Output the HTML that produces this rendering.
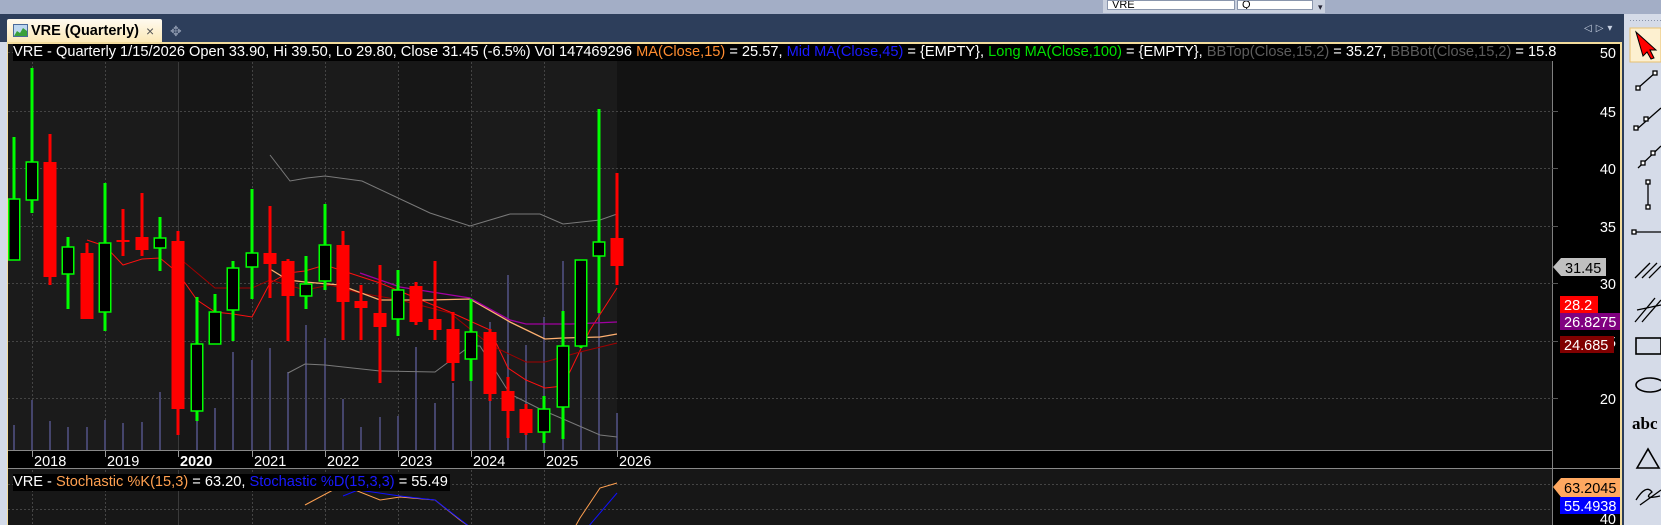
<!DOCTYPE html>
<html><head><meta charset="utf-8"><style>
*{margin:0;padding:0;box-sizing:border-box}
body{width:1661px;height:525px;overflow:hidden;background:#2c3d5a;font-family:"Liberation Sans",Arial,sans-serif;position:relative}
.abs{position:absolute}
.hdr{position:absolute;left:13px;top:44px;height:17px;background:#000;color:#fff;font-size:14.6px;line-height:17px;white-space:nowrap;padding-right:2px}
</style></head><body>
<div class="abs" style="left:0;top:0;width:1661px;height:14px;background:#a3aec6"></div>
<div class="abs" style="left:1103px;top:0;width:222px;height:13px;background:#c9d0de"></div>
<div class="abs" style="left:1107px;top:0;width:128px;height:10px;background:#fff;border:1px solid #8a96ad;font-size:11px;line-height:8px;padding-left:4px;color:#000;overflow:hidden">VRE</div>
<div class="abs" style="left:1237px;top:0;width:76px;height:10px;background:#fff;border:1px solid #8a96ad;font-size:11px;line-height:8px;padding-left:4px;color:#000;overflow:hidden">Q</div>
<div class="abs" style="left:1318px;top:2px;font-size:9px;color:#223">▾</div>
<div class="abs" style="left:0;top:14px;width:1661px;height:28px;background:#2d3e5b"></div>
<div class="abs" style="left:7px;top:19px;width:155px;height:24px;background:linear-gradient(#fffaf0,#fbe8b4);border-radius:2px 2px 0 0"></div>
<svg class="abs" style="left:13px;top:24px" width="15" height="13"><rect x="0.5" y="0.5" width="14" height="12" fill="#bcd6f0" stroke="#4a6a9a"/><path d="M1 12 L4 7 L7 9 L10 4 L14 7 L14 12Z" fill="#3aa03a"/></svg>
<div class="abs" style="left:31px;top:21px;font-size:14.5px;font-weight:bold;color:#000;line-height:20px">VRE (Quarterly)</div>
<div class="abs" style="left:146px;top:21px;font-size:14px;color:#555;line-height:20px">×</div>
<div class="abs" style="left:170px;top:21px;font-size:14px;color:#8894aa;line-height:20px">✥</div>
<div class="abs" style="left:1584px;top:23px;font-size:10px;color:#c9d2e2;letter-spacing:4px">◁▷▾</div>
<div class="abs" style="left:0;top:42px;width:7px;height:483px;background:#d3dae8"></div>
<div class="abs" style="left:7px;top:42px;width:1615px;height:483px;background:#f3dc9c"></div>
<svg class="abs" style="left:0;top:0" width="1661" height="525">
<rect x="8" y="44" width="1612" height="481" fill="#000"/>
<rect x="8" y="44" width="1544" height="406" fill="#171717"/>
<rect x="8" y="44" width="170" height="406" fill="#1b1b1b"/>
<rect x="252" y="44" width="146" height="406" fill="#1b1b1b"/>
<rect x="471" y="44" width="146" height="406" fill="#1b1b1b"/>
<rect x="617" y="44" width="935" height="406" fill="#131313"/>
<g stroke="#444" stroke-dasharray="2,2" stroke-width="1">
<line x1="8" y1="52.5" x2="1552" y2="52.5"/><line x1="8" y1="111.5" x2="1552" y2="111.5"/><line x1="8" y1="168.5" x2="1552" y2="168.5"/><line x1="8" y1="226.5" x2="1552" y2="226.5"/><line x1="8" y1="283.5" x2="1552" y2="283.5"/><line x1="8" y1="341.5" x2="1552" y2="341.5"/><line x1="8" y1="398.5" x2="1552" y2="398.5"/>
<line x1="32.5" y1="62" x2="32.5" y2="450"/><line x1="105.5" y1="62" x2="105.5" y2="450"/><line x1="252.5" y1="62" x2="252.5" y2="450"/><line x1="325.5" y1="62" x2="325.5" y2="450"/><line x1="398.5" y1="62" x2="398.5" y2="450"/><line x1="471.5" y1="62" x2="471.5" y2="450"/><line x1="544.5" y1="62" x2="544.5" y2="450"/>
</g>
<line x1="178.5" y1="62" x2="178.5" y2="450" stroke="#3a3a3a"/>
<line x1="1552.5" y1="44" x2="1552.5" y2="525" stroke="#808080"/>
<g stroke="#555" stroke-width="1"><line x1="1552" y1="52.5" x2="1558" y2="52.5"/><line x1="1552" y1="111.5" x2="1558" y2="111.5"/><line x1="1552" y1="168.5" x2="1558" y2="168.5"/><line x1="1552" y1="226.5" x2="1558" y2="226.5"/><line x1="1552" y1="283.5" x2="1558" y2="283.5"/><line x1="1552" y1="341.5" x2="1558" y2="341.5"/><line x1="1552" y1="398.5" x2="1558" y2="398.5"/></g>
<g stroke="#45456c" stroke-width="2">
<line x1="14" y1="425" x2="14" y2="450"/><line x1="32" y1="400" x2="32" y2="450"/><line x1="50" y1="421" x2="50" y2="450"/><line x1="68" y1="427" x2="68" y2="450"/><line x1="87" y1="427" x2="87" y2="450"/><line x1="105" y1="420" x2="105" y2="450"/><line x1="123" y1="423" x2="123" y2="450"/><line x1="142" y1="422" x2="142" y2="450"/><line x1="160" y1="392" x2="160" y2="450"/><line x1="197" y1="420" x2="197" y2="450"/><line x1="215" y1="408" x2="215" y2="450"/><line x1="233" y1="352" x2="233" y2="450"/><line x1="252" y1="360" x2="252" y2="450"/><line x1="270" y1="348" x2="270" y2="450"/><line x1="288" y1="372" x2="288" y2="450"/><line x1="306" y1="325" x2="306" y2="450"/><line x1="325" y1="338" x2="325" y2="450"/><line x1="343" y1="399" x2="343" y2="450"/><line x1="361" y1="427" x2="361" y2="450"/><line x1="380" y1="417" x2="380" y2="450"/><line x1="398" y1="416" x2="398" y2="450"/><line x1="416" y1="347" x2="416" y2="450"/><line x1="435" y1="403" x2="435" y2="450"/><line x1="453" y1="383" x2="453" y2="450"/><line x1="471" y1="322" x2="471" y2="450"/><line x1="490" y1="322" x2="490" y2="450"/><line x1="508" y1="275" x2="508" y2="450"/><line x1="526" y1="345" x2="526" y2="450"/><line x1="544" y1="317" x2="544" y2="450"/><line x1="563" y1="261" x2="563" y2="450"/><line x1="581" y1="352" x2="581" y2="450"/><line x1="599" y1="313" x2="599" y2="450"/><line x1="617" y1="413" x2="617" y2="450"/>
</g>
<g fill="none" stroke="#7a7a7a" stroke-width="1">
<polyline points="270,155 290,181 307,178 325,176 362,181 430,213 470,226 510,214 540,214 563,224 600,220 617,214"/>
<polyline points="288,373 305,364 325,365 380,371 435,372 470,346 480,346 510,394 540,409 600,435 617,437"/>
</g>
<polyline fill="none" stroke="#ff1010" stroke-width="1" points="87,240 105,246 123,265 142,259 160,258 178,273 197,300 215,312 233,314 252,317 270,283 288,273 305,271 325,265 380,283 450,312 490,330 508,368 526,380 545,388 563,386 590,330 617,288"/>
<polyline fill="none" stroke="#a00000" stroke-width="1" points="178,257 215,288 252,288 270,280 305,290 330,285 360,293 400,300 450,313 490,345 526,362 545,362 580,352 617,343"/>
<polyline fill="none" stroke="#ffb070" stroke-width="1.3" points="270,269 288,280 305,282 340,285 380,300 430,300 470,299 510,322 545,339 563,338 600,337 617,334"/>
<polyline fill="none" stroke="#a000a0" stroke-width="1.3" points="360,273 400,287 470,298 510,320 526,324 571,324 617,322"/>
<g id="c"></g>
<rect x="8" y="450" width="1544" height="18" fill="#000"/>
<line x1="8" y1="450.5" x2="1552" y2="450.5" stroke="#888"/>
<line x1="8" y1="468.5" x2="1620" y2="468.5" stroke="#888"/>
<g stroke="#999"><line x1="32.5" y1="451" x2="32.5" y2="457"/><line x1="105.5" y1="451" x2="105.5" y2="457"/><line x1="178.5" y1="451" x2="178.5" y2="457"/><line x1="252.5" y1="451" x2="252.5" y2="457"/><line x1="325.5" y1="451" x2="325.5" y2="457"/><line x1="398.5" y1="451" x2="398.5" y2="457"/><line x1="471.5" y1="451" x2="471.5" y2="457"/><line x1="544.5" y1="451" x2="544.5" y2="457"/><line x1="617.5" y1="451" x2="617.5" y2="457"/></g>
<g fill="#fff" font-size="14.5" font-family="Liberation Sans, Arial, sans-serif">
<text x="34" y="466">2018</text><text x="107" y="466">2019</text><text x="180" y="466" font-weight="bold">2020</text><text x="254" y="466">2021</text><text x="327" y="466">2022</text><text x="400" y="466">2023</text><text x="473" y="466">2024</text><text x="546" y="466">2025</text><text x="619" y="466">2026</text>
</g>
<rect x="8" y="469" width="1544" height="56" fill="#171717"/>
<g stroke="#444" stroke-dasharray="2,2"><line x1="8" y1="484.5" x2="1552" y2="484.5"/><line x1="8" y1="509.5" x2="1552" y2="509.5"/><line x1="32.5" y1="470" x2="32.5" y2="525"/><line x1="105.5" y1="470" x2="105.5" y2="525"/><line x1="252.5" y1="470" x2="252.5" y2="525"/><line x1="325.5" y1="470" x2="325.5" y2="525"/><line x1="398.5" y1="470" x2="398.5" y2="525"/><line x1="471.5" y1="470" x2="471.5" y2="525"/><line x1="544.5" y1="470" x2="544.5" y2="525"/></g>
<line x1="178.5" y1="470" x2="178.5" y2="525" stroke="#3a3a3a"/>
<line x1="1552.5" y1="469" x2="1552.5" y2="525" stroke="#808080"/>
<polyline fill="none" stroke="#ffa050" stroke-width="1" points="305,505 333,490 355,490 380,500 400,497 435,500 460,520 470,527"/>
<polyline fill="none" stroke="#ffa050" stroke-width="1" points="575,527 580,518 600,488 617,483"/>
<polyline fill="none" stroke="#1010ff" stroke-width="1" points="343,496 358,490 400,496 435,500 470,527"/>
<polyline fill="none" stroke="#1010ff" stroke-width="1" points="588,527 617,493"/>
<g fill="#fff" font-size="14.5" font-family="Liberation Sans, Arial, sans-serif" text-anchor="end">
<text x="1616" y="58">50</text><text x="1616" y="117">45</text><text x="1616" y="174">40</text><text x="1616" y="232">35</text><text x="1616" y="289">30</text><text x="1616" y="347">25</text><text x="1616" y="404">20</text><text x="1616" y="524">40</text>
</g>
<path d="M1553 267 L1561 258 L1606 258 L1606 276 L1561 276Z" fill="#c0c0c0"/>
<rect x="1560" y="296" width="38" height="17" fill="#ff0000"/>
<rect x="1560" y="313" width="60" height="17" fill="#800080"/>
<rect x="1560" y="336" width="54" height="17" fill="#800000"/>
<path d="M1553 487 L1561 478 L1620 478 L1620 497 L1561 497Z" fill="#ffa860"/>
<rect x="1560" y="497" width="60" height="17" fill="#0000ff"/>
<g font-size="14.5" font-family="Liberation Sans, Arial, sans-serif">
<text x="1565" y="273" fill="#000">31.45</text>
<text x="1564" y="310" fill="#fff">28.2</text>
<text x="1564" y="327" fill="#fff">26.8275</text>
<text x="1564" y="350" fill="#fff">24.685</text>
<text x="1564" y="493" fill="#000">63.2045</text>
<text x="1564" y="511" fill="#fff">55.4938</text>
</g>
<rect x="1624" y="42" width="37" height="483" fill="#d5dbe8"/>
<rect x="1624" y="14" width="37" height="28" fill="#d5dbe8"/>
<line x1="1630" y1="20.5" x2="1661" y2="20.5" stroke="#8892a8" stroke-dasharray="1,2"/>
<rect x="1630" y="28" width="31" height="34" fill="#fdf0d0" stroke="#e8c070"/>
<path d="M1636 32 L1656 50 L1650 50 L1654 58 L1651 59 L1647 52 L1643 56Z" fill="#ff0000" stroke="#000" stroke-width="1"/>
<g stroke="#000" stroke-width="1.3" fill="#fff">
<line x1="1638" y1="88" x2="1655" y2="73"/><rect x="1636" y="86" width="4" height="4"/><rect x="1653" y="71" width="4" height="4"/>
<line x1="1636" y1="130" x2="1661" y2="108"/><rect x="1634" y="126" width="4" height="4"/><rect x="1644" y="117" width="4" height="4"/>
<line x1="1638" y1="168" x2="1661" y2="146"/><rect x="1641" y="161" width="4" height="4"/><rect x="1651" y="151" width="4" height="4"/>
<line x1="1648" y1="182" x2="1648" y2="208"/><rect x="1646" y="180" width="4" height="4"/><rect x="1646" y="205" width="4" height="4"/>
<line x1="1634" y1="232" x2="1661" y2="232"/><rect x="1632" y="230" width="4" height="4"/>
<line x1="1635" y1="278" x2="1650" y2="263"/><line x1="1642" y1="278" x2="1657" y2="263"/><line x1="1649" y1="278" x2="1661" y2="266"/>
<line x1="1635" y1="322" x2="1655" y2="298"/><line x1="1642" y1="322" x2="1661" y2="300"/><line x1="1637" y1="310" x2="1661" y2="305"/>
<rect x="1636" y="338" width="25" height="16" fill="none" stroke-width="1.6"/>
<ellipse cx="1650" cy="385" rx="14" ry="7" fill="none" stroke-width="1.6"/>
<path d="M1637 468 L1648 449 L1659 468Z" fill="none" stroke-width="1.6"/>
<path d="M1636 500 Q1646 484 1652 492 Q1642 500 1660 496 M1640 505 L1661 490" fill="none"/>
</g>
<text x="1632" y="429" font-size="17" font-weight="bold" font-family="Liberation Serif, serif" fill="#000">abc</text>
</svg>
<div class="hdr" style="left:13px;top:44px"><span>VRE - Quarterly 1/15/2026 Open 33.90, Hi 39.50, Lo 29.80, Close 31.45 (-6.5%) Vol 147469296 </span><span style="color:#ff8c30">MA(Close,15)</span> = 25.57, <span style="color:#1a1aff">Mid MA(Close,45)</span> = {EMPTY}, <span style="color:#00e000">Long MA(Close,100)</span> = {EMPTY}, <span style="color:#5c5c5c">BBTop(Close,15,2)</span> = 35.27, <span style="color:#5c5c5c">BBBot(Close,15,2)</span> = 15.8</div>
<div class="hdr" style="left:13px;top:474px"><span>VRE - </span><span style="color:#ffa050">Stochastic %K(15,3)</span> = 63.20, <span style="color:#1a1aff">Stochastic %D(15,3,3)</span> = 55.49</div>
<script>
var d=[[14,137,260,199,260,'g'],[32,68,213,162,200,'g'],[50,134,285,162,277,'r'],[68,237,309,247,274,'g'],[87,243,319,253,319,'r'],[105,183,331,243,312,'g'],[123,209,256,240,242,'r'],[142,193,256,237,250,'r'],[160,217,271,238,248,'g'],[178,231,435,241,409,'r'],[197,297,421,344,411,'g'],[215,294,344,312,344,'g'],[233,261,341,268,310,'g'],[252,189,299,253,267,'g'],[270,206,298,253,264,'r'],[288,259,341,261,296,'r'],[306,256,309,284,296,'g'],[325,204,290,245,281,'g'],[343,231,340,245,302,'r'],[361,285,340,301,308,'r'],[380,265,383,313,327,'r'],[398,270,336,290,319,'g'],[416,282,325,286,322,'r'],[435,261,340,319,330,'r'],[453,312,381,329,363,'r'],[471,299,381,332,359,'g'],[490,329,401,332,394,'r'],[508,377,438,391,411,'r'],[526,404,435,409,433,'r'],[544,396,443,409,432,'g'],[563,311,439,346,407,'g'],[581,260,348,260,346,'g'],[599,109,313,242,256,'g'],[617,173,285,238,266,'r']];
var s='';d.forEach(function(c){var x=c[0],col=c[5]=='g'?'#00ff00':'#ff0000';
s+='<rect x="'+(x-1.5)+'" y="'+c[1]+'" width="3" height="'+(c[2]-c[1])+'" fill="'+col+'"/>';
var l=Math.max(8,x-6.5),w=x+6.5-l;
if(c[5]=='g')s+='<rect x="'+(l+0.75)+'" y="'+c[3]+'" width="'+(w-1.5)+'" height="'+Math.max(2,c[4]-c[3])+'" fill="#000" stroke="#00ff00" stroke-width="1.5"/>';
else s+='<rect x="'+l+'" y="'+c[3]+'" width="'+w+'" height="'+Math.max(2,c[4]-c[3])+'" fill="#ff0000"/>';});
document.getElementById('c').innerHTML=s;
</script>
</body></html>
